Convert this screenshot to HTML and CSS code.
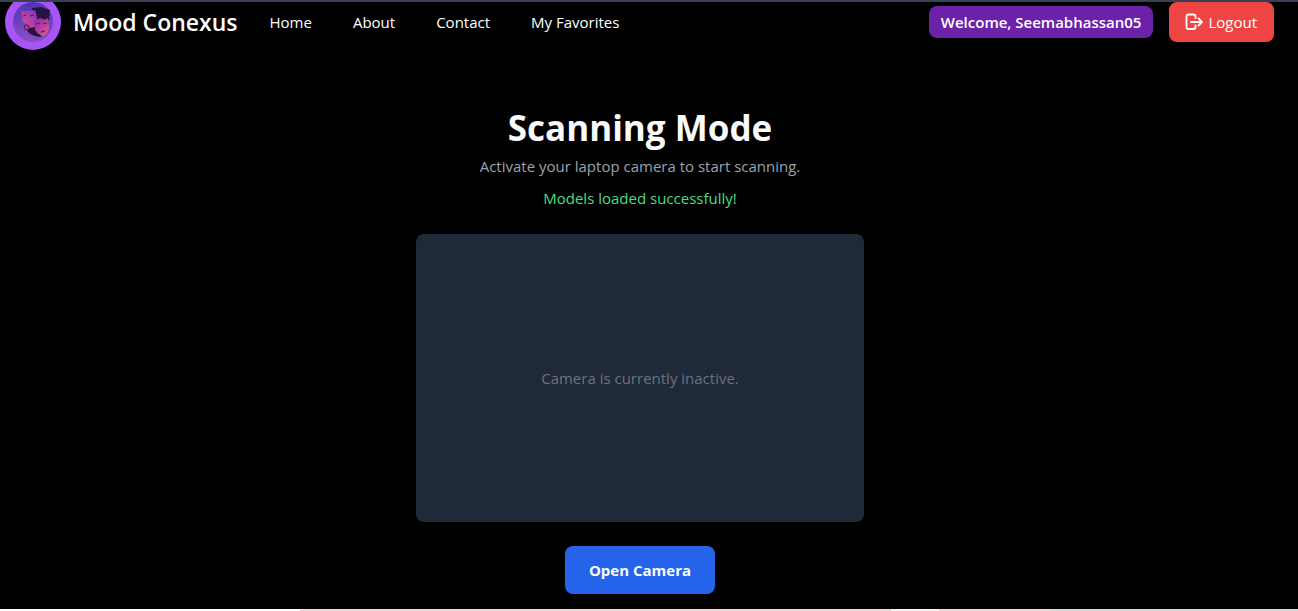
FILE: index.html
```html
<!DOCTYPE html>
<html lang="en">
<head>
<meta charset="utf-8">
<meta name="viewport" content="width=device-width, initial-scale=1">
<title>Mood Conexus</title>
<link rel="stylesheet" href="styles.css">
</head>
<body>
<div class="top-edge"></div>
<header class="navbar">
  <a class="brand" href="#">
    <svg class="logo" viewBox="0 0 56 56" aria-hidden="true">
      <defs>
        <linearGradient id="disc" x1="0" y1="0" x2="0" y2="1"><stop offset="0" stop-color="#4d35b4"/><stop offset="1" stop-color="#8a4fc4"/></linearGradient>
        <linearGradient id="back" x1="1" y1="0" x2="0" y2="1"><stop offset="0" stop-color="#8a2fc0"/><stop offset="1" stop-color="#d65585"/></linearGradient>
        <linearGradient id="front" x1="0" y1="0" x2="1" y2="1"><stop offset="0" stop-color="#8429b4"/><stop offset="0.500" stop-color="#b83c9c"/><stop offset="1" stop-color="#e0607e"/></linearGradient>
      </defs>
      <circle cx="28" cy="28" r="28" fill="#a855f7"/>
      <circle cx="28" cy="28" r="20" fill="url(#disc)"/>
      <path d="M27 14l9-1 9 3-1 10-15 1zM20 33l10-4 2 8 5 6q-8 0-13-4z" fill="#271342"/>
      <path d="M16 17q7 1 14-1l2 7-2 10-5 1-2-3-5-3z" fill="url(#back)"/>
      <path d="M18 22l3-1M25 22l4-1M19 32q2-2 5 0v4l-4-1z" fill="#b83c89" stroke="#4a1762" stroke-width="1"/>
      <path d="M29 26l7-2q3 3 7 0l1 10q-1 6-5 8-6-1-9-6z" fill="url(#front)"/>
      <path d="M31 30l4-1M38 30l4-1M36 38l4-1" stroke="#591963" stroke-width="1.100" fill="none"/>
    </svg>
    <span>Mood Conexus</span>
  </a>
  <nav class="links" aria-label="Main">
    <a href="#">Home</a>
    <a href="#">About</a>
    <a href="#">Contact</a>
    <a href="#">My Favorites</a>
  </nav>
  <div class="account">
    <span class="welcome">Welcome, Seemabhassan05</span>
    <button class="logout" type="button">
      <svg class="logout-icon" viewBox="0 0 18 18" aria-hidden="true"><path d="M10.500 5V3.500Q10.500 1.500 8.500 1.500H3.500Q1.500 1.500 1.500 3.500V14Q1.500 16 3.500 16H8.500Q10.500 16 10.500 14V12.500M6 9H17M13.500 5.500L17 9L13.500 12.500"/></svg>
      Logout
    </button>
  </div>
</header>
<main class="scanner">
  <h1>Scanning Mode</h1>
  <p class="hint">Activate your laptop camera to start scanning.</p>
  <p class="status">Models loaded successfully!</p>
  <div class="preview"><p>Camera is currently inactive.</p></div>
  <button class="open" type="button">Open Camera</button>
</main>
<div class="bottom-edge"><span class="edge-white"></span><span class="edge-pink"></span><span class="edge-light"></span><span class="edge-pink"></span><span class="edge-gray"></span></div>
</body>
</html>
```
FILE: styles.css
```css
* { box-sizing: border-box; }

body {
  margin: 0;
  min-height: 100vh;
  display: flex;
  flex-direction: column;
  background: #000;
  color: #fff;
  font-family: "Open Sans", "Noto Sans", sans-serif;
  font-size: 15px;
  line-height: 24px;
}

h1, p { margin: 0; }
a { color: inherit; text-decoration: none; }

button {
  border: 0;
  border-radius: 8px;
  color: #fff;
  font: inherit;
  cursor: pointer;
}

.top-edge {
  position: relative;
  z-index: 1;
  height: 2px;
  background: #374151;
}

.navbar {
  display: flex;
  align-items: center;
  height: 40px;
  padding: 0 24px 0 5px;
}

.brand {
  display: flex;
  align-items: center;
  gap: 12px;
  font-size: 23px;
  font-weight: 600;
  line-height: 32px;
  white-space: nowrap;
}

.logo {
  width: 56px;
  height: 56px;
  margin: -8px 0;
}

.links {
  display: flex;
  gap: 41px;
  margin-left: 32px;
  white-space: nowrap;
}

.account {
  display: flex;
  align-items: center;
  gap: 16px;
  margin-left: auto;
  white-space: nowrap;
}

.welcome {
  padding: 4px 12px;
  border-radius: 8px;
  background: #6b21a8;
  font-weight: 600;
}

.logout {
  display: flex;
  align-items: center;
  gap: 5px;
  padding: 8px 17px 8px 16px;
  background: #ef4444;
}

.logout-icon {
  width: 18px;
  height: 18px;
  fill: none;
  stroke: currentColor;
  stroke-width: 1.8;
  stroke-linecap: round;
  stroke-linejoin: round;
}

.scanner {
  flex: 1;
  display: flex;
  flex-direction: column;
  align-items: center;
  padding: 66px 18px 15px 0;
}

h1 {
  color: #f9fafb;
  font-size: 35px;
  font-weight: 700;
  line-height: 40px;
}

.hint {
  margin-top: 6px;
  color: #9ca3af;
}

.status {
  margin-top: 8px;
  color: #4ade80;
}

.preview {
  display: flex;
  align-items: center;
  justify-content: center;
  width: 100%;
  max-width: 448px;
  height: 288px;
  margin: 24px 0;
  border-radius: 8px;
  background: #1f2937;
  color: #6b7280;
}

.open {
  padding: 12px 24px;
  background: #2563eb;
  font-weight: 700;
}

.bottom-edge {
  display: grid;
  grid-template-columns: 300fr 591fr 48fr 111fr 248fr;
  height: 2px;
}

.edge-white { background: #fff; }
.edge-pink { background: #ecdada; }
.edge-light { background: #f8f1f1; }
.edge-gray { background: #d9d9d9; }
```
